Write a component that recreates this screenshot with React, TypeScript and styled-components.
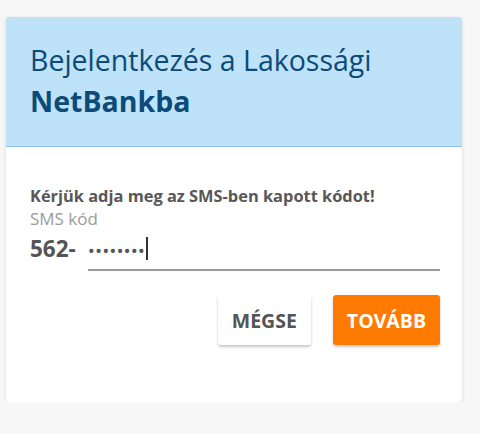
import React from 'react';
import styled, { createGlobalStyle } from 'styled-components';

const GlobalStyle = createGlobalStyle`
  html, body {
    margin: 0;
    padding: 0;
    background: #f7f7f7;
    font-family: "Open Sans", "Noto Sans", sans-serif;
  }
`;

const Page = styled.div`
  padding: 17px 18px 0 6px;
`;

const Card = styled.div`
  background: #ffffff;
  border-radius: 3px;
  box-shadow: 0 1px 4px rgba(0, 0, 0, 0.12);
  overflow: hidden;
`;

const Header = styled.div`
  background: #bee3f9;
  border-bottom: 1px solid #8fc1e0;
  padding: 23px 24px 24px;
`;

const Title = styled.h1`
  margin: 0;
  font-size: 28.5px;
  line-height: 41px;
  font-weight: 400;
  color: #0c4a79;

  strong {
    font-weight: 700;
  }
`;

const Body = styled.div`
  padding: 38px 22px 57px 24px;
`;

const Prompt = styled.div`
  font-size: 16.4px;
  line-height: 22px;
  font-weight: 700;
  color: #575757;
`;

const Label = styled.div`
  font-size: 17px;
  line-height: 22px;
  margin-top: 1px;
  color: #9b9b9b;
`;

const InputRow = styled.div`
  display: flex;
  align-items: flex-end;
  gap: 12px;
  margin-top: 2px;
`;

const Prefix = styled.span`
  font-size: 22.5px;
  line-height: 32px;
  font-weight: 700;
  color: #555;
  padding-bottom: 6px;
`;

const Field = styled.div`
  flex: 1;
  display: flex;
  align-items: center;
  height: 37px;
  border-bottom: 2px solid #9b9b9b;
`;

const Dots = styled.span`
  font-size: 19px;
  letter-spacing: 0px;
  color: #555;
  padding-left: 0;
`;

const Caret = styled.span`
  display: inline-block;
  width: 1.5px;
  height: 23px;
  background: #333;
  margin-left: 1px;
  margin-top: -4px;
`;

const Actions = styled.div`
  display: flex;
  justify-content: flex-end;
  gap: 22px;
  margin-top: 24px;
`;

const Button = styled.button<{ $primary?: boolean }>`
  height: 50px;
  padding: 0 14px;
  border: none;
  border-radius: 3px;
  font-family: "Open Sans", "Noto Sans", sans-serif;
  font-size: 19.5px;
  font-weight: 700;
  background: ${p => (p.$primary ? '#ff7a00' : '#ffffff')};
  color: ${p => (p.$primary ? '#ffffff' : '#555555')};
  box-shadow: 0 2px 3px rgba(0, 0, 0, 0.22);
  cursor: pointer;
`;

export default function App() {
  return (
    <>
      <GlobalStyle />
      <Page>
        <Card>
          <Header>
            <Title>
              Bejelentkezés a Lakossági
              <br />
              <strong>NetBankba</strong>
            </Title>
          </Header>
          <Body>
            <Prompt>Kérjük adja meg az SMS-ben kapott kódot!</Prompt>
            <Label>SMS kód</Label>
            <InputRow>
              <Prefix>562-</Prefix>
              <Field>
                <Dots>••••••••</Dots>
                <Caret />
              </Field>
            </InputRow>
            <Actions>
              <Button>MÉGSE</Button>
              <Button $primary>TOVÁBB</Button>
            </Actions>
          </Body>
        </Card>
      </Page>
    </>
  );
}
